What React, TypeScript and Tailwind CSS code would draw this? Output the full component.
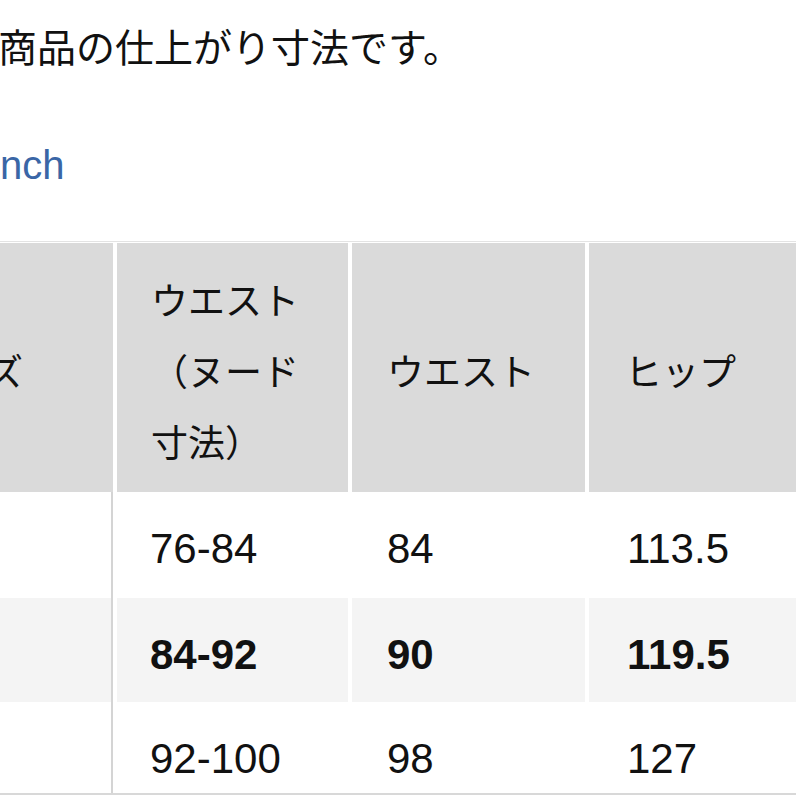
import React from "react";

const rows = [
  { size: "M", nude: "76-84", waist: "84", hip: "113.5", weight: "font-normal", bg: "bg-white", h: "h-[106px]" },
  { size: "L", nude: "84-92", waist: "90", hip: "119.5", weight: "font-bold", bg: "bg-[#f4f4f4]", h: "h-[104px]" },
  { size: "XL", nude: "92-100", waist: "98", hip: "127", weight: "font-normal", bg: "bg-white", h: "h-[91px]" },
];

function Head({ children, pl }: { children: React.ReactNode; pl: string }) {
  return (
    <div className={`h-[249px] bg-[#dadada] flex items-center pt-[12px] pr-[30px] text-[37px] leading-[71px] ${pl}`}>
      {children}
    </div>
  );
}

export default function App() {
  return (
    <div className="w-[796px] h-[796px] overflow-hidden bg-white text-[#111] font-['Liberation_Sans','Noto_Sans_CJK_JP',sans-serif]">
      <p className="pt-[30px] -ml-[2px] text-[39px] leading-[38px] whitespace-nowrap">
        商品の仕上がり寸法です。
      </p>
      <p className="mt-[78px] -ml-[9px] text-[40px] leading-[38px] text-[#3a66a6]">inch</p>
      <div className="mt-[57px] -ml-[122px] border-t border-[#e3e3e3] pt-[1px]">
        <div className="grid grid-cols-[235px_231px_233px_1fr] gap-x-[4px] border-b-2 border-[#d8d8d8]">
          <Head pl="pl-[35px]">サイズ</Head>
          <Head pl="pl-[34px]">ウエスト（ヌード寸法）</Head>
          <Head pl="pl-[35px]">ウエスト</Head>
          <Head pl="pl-[36px]">ヒップ</Head>
          {rows.map((r) => (
            <React.Fragment key={r.size}>
              <div className={`${r.h} ${r.bg} ${r.weight} border-r-2 border-[#d4d4d4] pl-[35px] pt-[32px] text-[42px] leading-[50px]`}>
                {r.size}
              </div>
              <div className={`${r.h} ${r.bg} ${r.weight} pl-[33px] pt-[32px] text-[42px] leading-[50px]`}>
                {r.nude}
              </div>
              <div className={`${r.h} ${r.bg} ${r.weight} pl-[35px] pt-[32px] text-[42px] leading-[50px]`}>
                {r.waist}
              </div>
              <div className={`${r.h} ${r.bg} ${r.weight} pl-[38px] pt-[32px] text-[42px] leading-[50px]`}>
                {r.hip}
              </div>
            </React.Fragment>
          ))}
        </div>
      </div>
    </div>
  );
}
